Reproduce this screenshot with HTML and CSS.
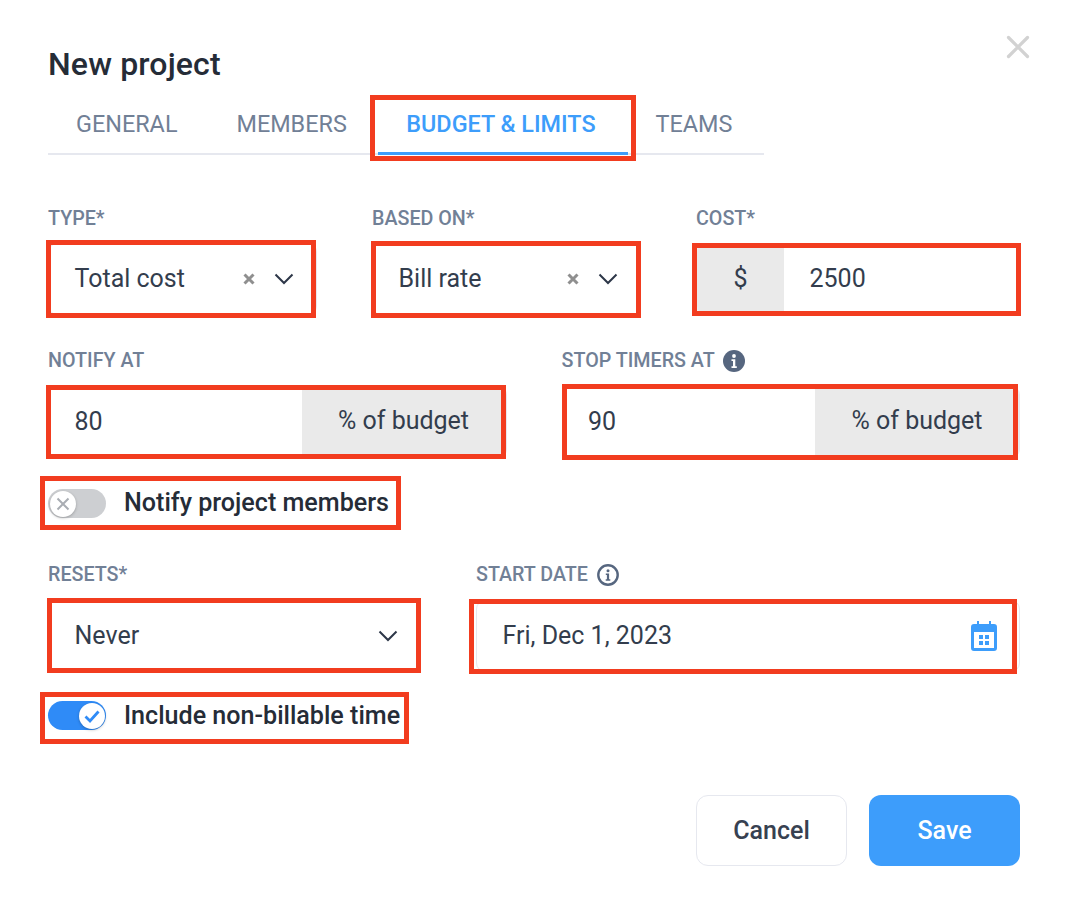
FILE: index.html
```html
<!DOCTYPE html>
<html lang="en">
<head>
<meta charset="utf-8">
<title>New project</title>
<link rel="stylesheet" href="styles.css">
</head>
<body>
<main class="dialog">
  <button class="close" aria-label="Close">
    <svg width="24" height="24" viewBox="0 0 24 24"><path d="M2.500 2.500l19 19M21.500 2.500l-19 19" stroke="#d2d2d2" stroke-width="3.200" stroke-linecap="round" fill="none"/></svg>
  </button>
  <h1 class="title">New project</h1>
  <nav class="tabs">
    <a class="tab">GENERAL</a>
    <a class="tab">MEMBERS</a>
    <a class="tab active">BUDGET &amp; LIMITS<span class="mark m-tab"></span></a>
    <a class="tab">TEAMS</a>
  </nav>

  <section class="row row-3">
    <div class="group">
      <label class="label">TYPE*</label>
      <div class="field select"><span class="value">Total cost</span>
        <svg class="clear" width="14" height="14" viewBox="0 0 14 14"><path d="M2.500 2.500l9 9M11.500 2.500l-9 9" stroke="#8f8f8f" stroke-width="3" fill="none"/></svg>
        <svg class="chev" width="20" height="12" viewBox="0 0 20 12"><path d="M1.500 1.500L10 10l8.500-8.500" stroke="#2d3748" stroke-width="2" fill="none"/></svg>
        <span class="mark m-type"></span></div>
    </div>
    <div class="group">
      <label class="label">BASED ON*</label>
      <div class="field select"><span class="value">Bill rate</span>
        <svg class="clear" width="14" height="14" viewBox="0 0 14 14"><path d="M2.500 2.500l9 9M11.500 2.500l-9 9" stroke="#8f8f8f" stroke-width="3" fill="none"/></svg>
        <svg class="chev" width="20" height="12" viewBox="0 0 20 12"><path d="M1.500 1.500L10 10l8.500-8.500" stroke="#2d3748" stroke-width="2" fill="none"/></svg>
        <span class="mark m-based"></span></div>
    </div>
    <div class="group">
      <label class="label">COST*</label>
      <div class="field"><span class="addon addon-left">$</span><span class="value">2500</span><span class="mark m-cost"></span></div>
    </div>
  </section>

  <section class="row row-2">
    <div class="group">
      <label class="label">NOTIFY AT</label>
      <div class="field"><span class="value grow">80</span><span class="addon addon-right">% of budget</span><span class="mark m-notify"></span></div>
    </div>
    <div class="group">
      <label class="label gap-sm">STOP TIMERS AT
        <svg class="info" width="22" height="22" viewBox="0 0 22 22"><circle cx="11" cy="11" r="11" fill="#56667f"/><circle cx="11" cy="6" r="1.900" fill="#fff"/><path d="M8.500 9.300h3.800v7h1.500v1.700H8.500v-1.700h1.500v-5.300H8.500z" fill="#fff"/></svg>
      </label>
      <div class="field"><span class="value grow">90</span><span class="addon addon-right">% of budget</span><span class="mark m-stop"></span></div>
    </div>
  </section>

  <div class="switch-row first">
    <span class="toggle off"><span class="knob"><svg width="16" height="16" viewBox="0 0 16 16"><path d="M2.500 2.500l11 11M13.500 2.500l-11 11" stroke="#a9adb3" stroke-width="2" fill="none"/></svg></span></span>
    <span class="switch-label">Notify project members</span>
    <span class="mark m-sw1"></span>
  </div>

  <section class="row row-reset">
    <div class="group">
      <label class="label">RESETS*</label>
      <div class="field select"><span class="value">Never</span>
        <svg class="chev" width="20" height="12" viewBox="0 0 20 12"><path d="M1.500 1.500L10 10l8.500-8.500" stroke="#2d3748" stroke-width="2" fill="none"/></svg>
        <span class="mark m-reset"></span></div>
    </div>
    <div class="group">
      <label class="label">START DATE
        <svg class="info" width="22" height="22" viewBox="0 0 22 22"><circle cx="11" cy="11" r="9.700" fill="none" stroke="#56667f" stroke-width="2.400"/><circle cx="11" cy="6.800" r="1.500" fill="#56667f"/><path d="M8.800 9.500h3.300v5.800h1.200v1.500H8.700v-1.500h1.200v-4.300H8.800z" fill="#56667f"/></svg>
      </label>
      <div class="field select"><span class="value">Fri, Dec 1, 2023</span>
        <svg class="cal" width="26" height="30" viewBox="0 0 26 30"><path d="M6 0h2v3h10V0h2v3h3a3 3 0 0 1 3 3v21a3 3 0 0 1-3 3H3a3 3 0 0 1-3-3V6a3 3 0 0 1 3-3h3z" fill="#3d9dfb"/><rect x="3" y="11" width="20" height="16" fill="#fff"/><rect x="8" y="14" width="4" height="4" fill="#3d9dfb"/><rect x="14" y="14" width="4" height="4" fill="#3d9dfb"/><rect x="8" y="20" width="4" height="4" fill="#3d9dfb"/><rect x="14" y="20" width="4" height="4" fill="#3d9dfb"/></svg>
        <span class="mark m-start"></span></div>
    </div>
  </section>

  <div class="switch-row second">
    <span class="toggle on"><span class="knob"><svg width="18" height="16" viewBox="0 0 18 16"><path d="M2.500 8.500l4.500 4.500 8.500-9.500" stroke="#2f8bf7" stroke-width="2.800" fill="none"/></svg></span></span>
    <span class="switch-label">Include non-billable time</span>
    <span class="mark m-sw2"></span>
  </div>

  <footer class="actions">
    <button class="btn cancel">Cancel</button>
    <button class="btn save">Save</button>
  </footer>
</main>
</body>
</html>
```

FILE: styles.css
```css
* { box-sizing: border-box; }
html, body { margin: 0; padding: 0; background: #fff; }
body { width: 1068px; height: 918px; overflow: hidden; font-family: Roboto, "Liberation Sans", sans-serif; color: #333d4d; }

.dialog { position: relative; padding: 46px 48px 0; height: 918px; }
.close { position: absolute; top: 35px; right: 38px; width: 24px; height: 24px; padding: 0; border: 0; background: none; }
.close svg { display: block; }

.title { margin: 0; font-size: 32px; line-height: 36px; font-weight: 500; letter-spacing: .15px; color: #252c37; }

.tabs { display: flex; width: 716px; height: 73px; padding-top: 25px; border-bottom: 2px solid #e6e8ef; }
.tab { position: relative; height: 46px; padding: 0 29.500px; font-size: 23.400px; line-height: 34px; white-space: nowrap; color: #718096; }
.tab:first-child { padding-left: 28px; }
.tab.active { margin: 0 -1.500px 0 2px; padding: 0 32px 0 28px; color: #3d9dfb; font-weight: 500; }
.tab.active::after { content: ""; position: absolute; left: 0; right: 0; bottom: -2px; height: 3px; background: #3d9dfb; }

.row { display: grid; column-gap: 55px; }
.row-3 { grid-template-columns: 269px 269px 1fr; margin-top: 53px; }
.row-3 .field { margin-top: 13px; }
.row-2 { grid-template-columns: 1fr 1fr; margin-top: 35px; }
.row-reset { grid-template-columns: 373px 1fr; margin-top: 46px; }

.label { display: flex; align-items: center; gap: 9px; height: 22px; font-size: 19.700px; line-height: 22px; font-weight: 500; color: #718096; }
.gap-sm { gap: 8px; }
.info { flex: none; }

.field { position: relative; display: flex; align-items: center; height: 72px; margin-top: 14px; border: 1px solid #e6e8ef; border-radius: 9px; font-size: 25px; }
.value { padding: 0 0 2px 25.500px; }
.grow { flex: 1; }
.select { padding-right: 22px; }
.select .value { flex: 1; }
.clear { margin-right: 18px; }
.addon { display: flex; align-items: center; justify-content: center; align-self: stretch; padding-bottom: 4px; background: #eaeaea; }
.addon-left { width: 87px; padding-bottom: 2px; border-radius: 8px 0 0 8px; }
.addon-right { width: 204px; border-radius: 0 8px 8px 0; }

.switch-row { position: relative; display: flex; align-items: center; gap: 18px; width: max-content; height: 29px; }
.switch-row.first { margin-top: 31px; }
.switch-row.first .switch-label { padding-bottom: 2px; }
.switch-row.second { margin-top: 29px; }
.switch-label { font-size: 25.100px; font-weight: 500; color: #252c37; }
.toggle { display: flex; align-items: center; width: 58px; height: 29px; padding: 1px; border-radius: 15px; }
.toggle.off { background: #cdcfd2; }
.toggle.on { background: #2f8bf7; justify-content: flex-end; }
.knob { display: flex; align-items: center; justify-content: center; width: 26px; height: 26px; border-radius: 50%; background: #fff; box-shadow: 0 1px 3px rgba(0,0,0,.25); }
.off .knob { margin-left: 1px; }

.actions { display: flex; justify-content: flex-end; gap: 22px; margin-top: 65px; }
.btn { width: 151px; height: 71px; border-radius: 12px; font: 500 25px Roboto, "Liberation Sans", sans-serif; }
.cancel { background: #fff; border: 1px solid #e6e8ef; color: #374151; }
.save { background: #3d9dfb; border: 0; color: #fff; }

.mark { position: absolute; border: 5px solid #f23c1f; pointer-events: none; }
.m-tab { left: -8px; right: -8px; top: -12px; bottom: -8px; }
.m-type { left: -3px; right: 0; top: -4px; bottom: -4px; }
.m-based { left: -2px; right: -1px; top: -3px; bottom: -4px; }
.m-cost { left: -5px; right: -2px; top: -1px; bottom: -2px; }
.m-notify { left: -3px; right: 0; top: -2px; bottom: -2px; }
.m-stop { left: -1px; right: 1px; top: -3px; bottom: -3px; }
.m-sw1 { left: -8px; right: -12px; top: -13px; bottom: -12px; }
.m-reset { left: -2px; right: -1px; top: -3px; bottom: -2px; }
.m-start { left: -8px; right: 2px; top: -2px; bottom: -3px; }
.m-sw2 { left: -8px; right: -9px; top: -9px; bottom: -14px; }
```
